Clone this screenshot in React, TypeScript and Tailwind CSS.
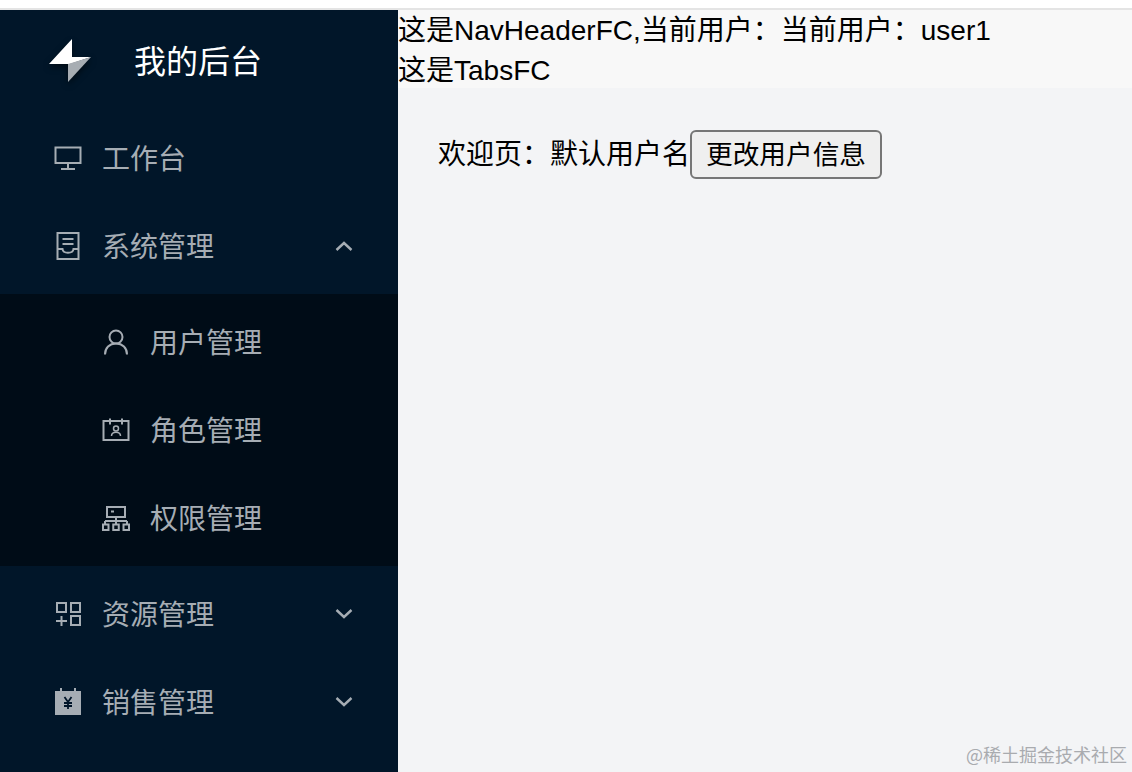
import React from "react";

const cjk = "font-['Noto_Sans_CJK_SC',sans-serif]";

function Monitor() {
  return (
    <svg viewBox="0 0 28 28" className="w-7 h-7" fill="none" stroke="currentColor" strokeWidth="2">
      <rect x="1.500" y="3.500" width="25" height="15.500" />
      <path d="M14 19v6M7 25h14" />
    </svg>
  );
}
function Doc() {
  return (
    <svg viewBox="0 0 28 28" className="w-7 h-7" fill="none" stroke="currentColor" strokeWidth="2">
      <rect x="3.500" y="1" width="21" height="26" />
      <path d="M8.500 7h11M8.500 12h11M3.500 17h5c0.500 5 10.500 5 11 0h5" />
    </svg>
  );
}
function User() {
  return (
    <svg viewBox="0 0 28 28" className="w-7 h-7" fill="none" stroke="currentColor" strokeWidth="2">
      <circle cx="14" cy="9" r="6.500" />
      <path d="M3 26.500c0-6.500 4.500-11 11-11s11 4.500 11 11" />
    </svg>
  );
}
function Badge() {
  return (
    <svg viewBox="0 0 28 28" className="w-7 h-7" fill="none" stroke="currentColor" strokeWidth="2">
      <rect x="1.500" y="5" width="25" height="19" />
      <path d="M8 2.500v6M20 2.500v6" />
      <circle cx="14" cy="12.500" r="2.500" strokeWidth="1.500" />
      <path d="M9.500 20c0-5 9-5 9 0" strokeWidth="1.500" />
    </svg>
  );
}
function Org() {
  return (
    <svg viewBox="0 0 28 28" className="w-7 h-7" fill="none" stroke="currentColor" strokeWidth="2">
      <rect x="5" y="3" width="18" height="10" />
      <path d="M14 13v3M3 17h22M3 17v3M25 17v3M14 16v4M9 7.500h3" />
      <rect x="1" y="20.500" width="5.500" height="5.500" />
      <rect x="11.250" y="20.500" width="5.500" height="5.500" />
      <rect x="21.500" y="20.500" width="5.500" height="5.500" />
    </svg>
  );
}
function Apps() {
  return (
    <svg viewBox="0 0 28 28" className="w-7 h-7" fill="none" stroke="currentColor" strokeWidth="2">
      <rect x="3" y="3" width="9" height="9" />
      <rect x="17" y="3" width="9" height="9" />
      <rect x="17" y="16" width="9" height="9" />
      <path d="M2 21h11M7.500 16v10" />
    </svg>
  );
}
function Sales() {
  return (
    <svg viewBox="0 0 28 28" className="w-7 h-7" fill="none">
      <path d="M1 3h5V0h2v3h12V0h2v3h5v24H1z" fill="currentColor" />
      <path d="M10.500 9l3.500 5 3.500-5M10 15h8M10 18h8M14 14v7" stroke="#001529" strokeWidth="1.800" />
    </svg>
  );
}
function Chevron({ up }: { up?: boolean }) {
  return (
    <svg viewBox="0 0 18 12" className="w-[18px] h-3" fill="none" stroke="currentColor" strokeWidth="2.400">
      <path d={up ? "M1.500 10L9 3l7.500 7" : "M1.500 2L9 9l7.500-7"} />
    </svg>
  );
}

function Item({
  icon,
  label,
  sub,
  arrow,
}: {
  icon: React.ReactNode;
  label: string;
  sub?: boolean;
  arrow?: "up" | "down";
}) {
  return (
    <div className={`h-20 flex items-center gap-5 pr-[45px] text-[#a6adb4] ${sub ? "pl-[102px]" : "pl-[54px]"}`}>
      <span className="shrink-0 w-7 h-7 flex">{icon}</span>
      <span className="flex-1 pb-[3px] text-[28px] leading-10">{label}</span>
      {arrow && <Chevron up={arrow === "up"} />}
    </div>
  );
}

export default function App() {
  return (
    <div className={`relative h-[772px] overflow-hidden bg-white ${cjk}`}>
      <div className="h-2 bg-white" />
      <div className="h-0.5 bg-[#e4e4e4]" />
      <div className="flex h-[762px]">
        <aside className="w-[398px] shrink-0 bg-[#011629]">
          <div className="h-[102px] flex items-center pl-[49px] gap-[43px]">
            <svg viewBox="0 0 42 44" className="w-[42px] h-11 drop-shadow-[0_3px_3px_rgba(0,0,0,0.5)]">
              <path d="M23 0L0 25h21l21-7H23z" fill="#ffffff" />
              <path d="M42 18L19 43V25z" fill="#a7adb3" />
            </svg>
            <span className="pb-1 text-[32px] leading-10 text-white">我的后台</span>
          </div>
          <div className="pt-[6px] flex flex-col gap-2">
            <Item icon={<Monitor />} label="工作台" />
            <Item icon={<Doc />} label="系统管理" arrow="up" />
            <div className="bg-[#000c17] py-2 flex flex-col gap-2">
              <Item sub icon={<User />} label="用户管理" />
              <Item sub icon={<Badge />} label="角色管理" />
              <Item sub icon={<Org />} label="权限管理" />
            </div>
            <Item icon={<Apps />} label="资源管理" arrow="down" />
            <Item icon={<Sales />} label="销售管理" arrow="down" />
          </div>
        </aside>
        <main className="flex-1 bg-[#f3f4f6] text-black text-[28px] leading-10 font-['Liberation_Sans','Noto_Sans_CJK_SC',sans-serif]">
          <div className="h-[78px] pt-px bg-[#f8f8f8] overflow-visible">
            <div>这是NavHeaderFC,当前用户：当前用户：user1</div>
            <div>这是TabsFC</div>
          </div>
          <div className="pl-10 pt-[42px] flex items-start">
            <span className="mt-[5px]">欢迎页：默认用户名</span>
            <button className="w-48 h-[49px] border-2 border-[#767676] rounded-md bg-[#efefef] text-[26.67px] leading-10">
              更改用户信息
            </button>
          </div>
        </main>
      </div>
      <div className="absolute right-[5px] bottom-[6px] text-[18px] leading-6 text-[#a9abaf]">@稀土掘金技术社区</div>
    </div>
  );
}
